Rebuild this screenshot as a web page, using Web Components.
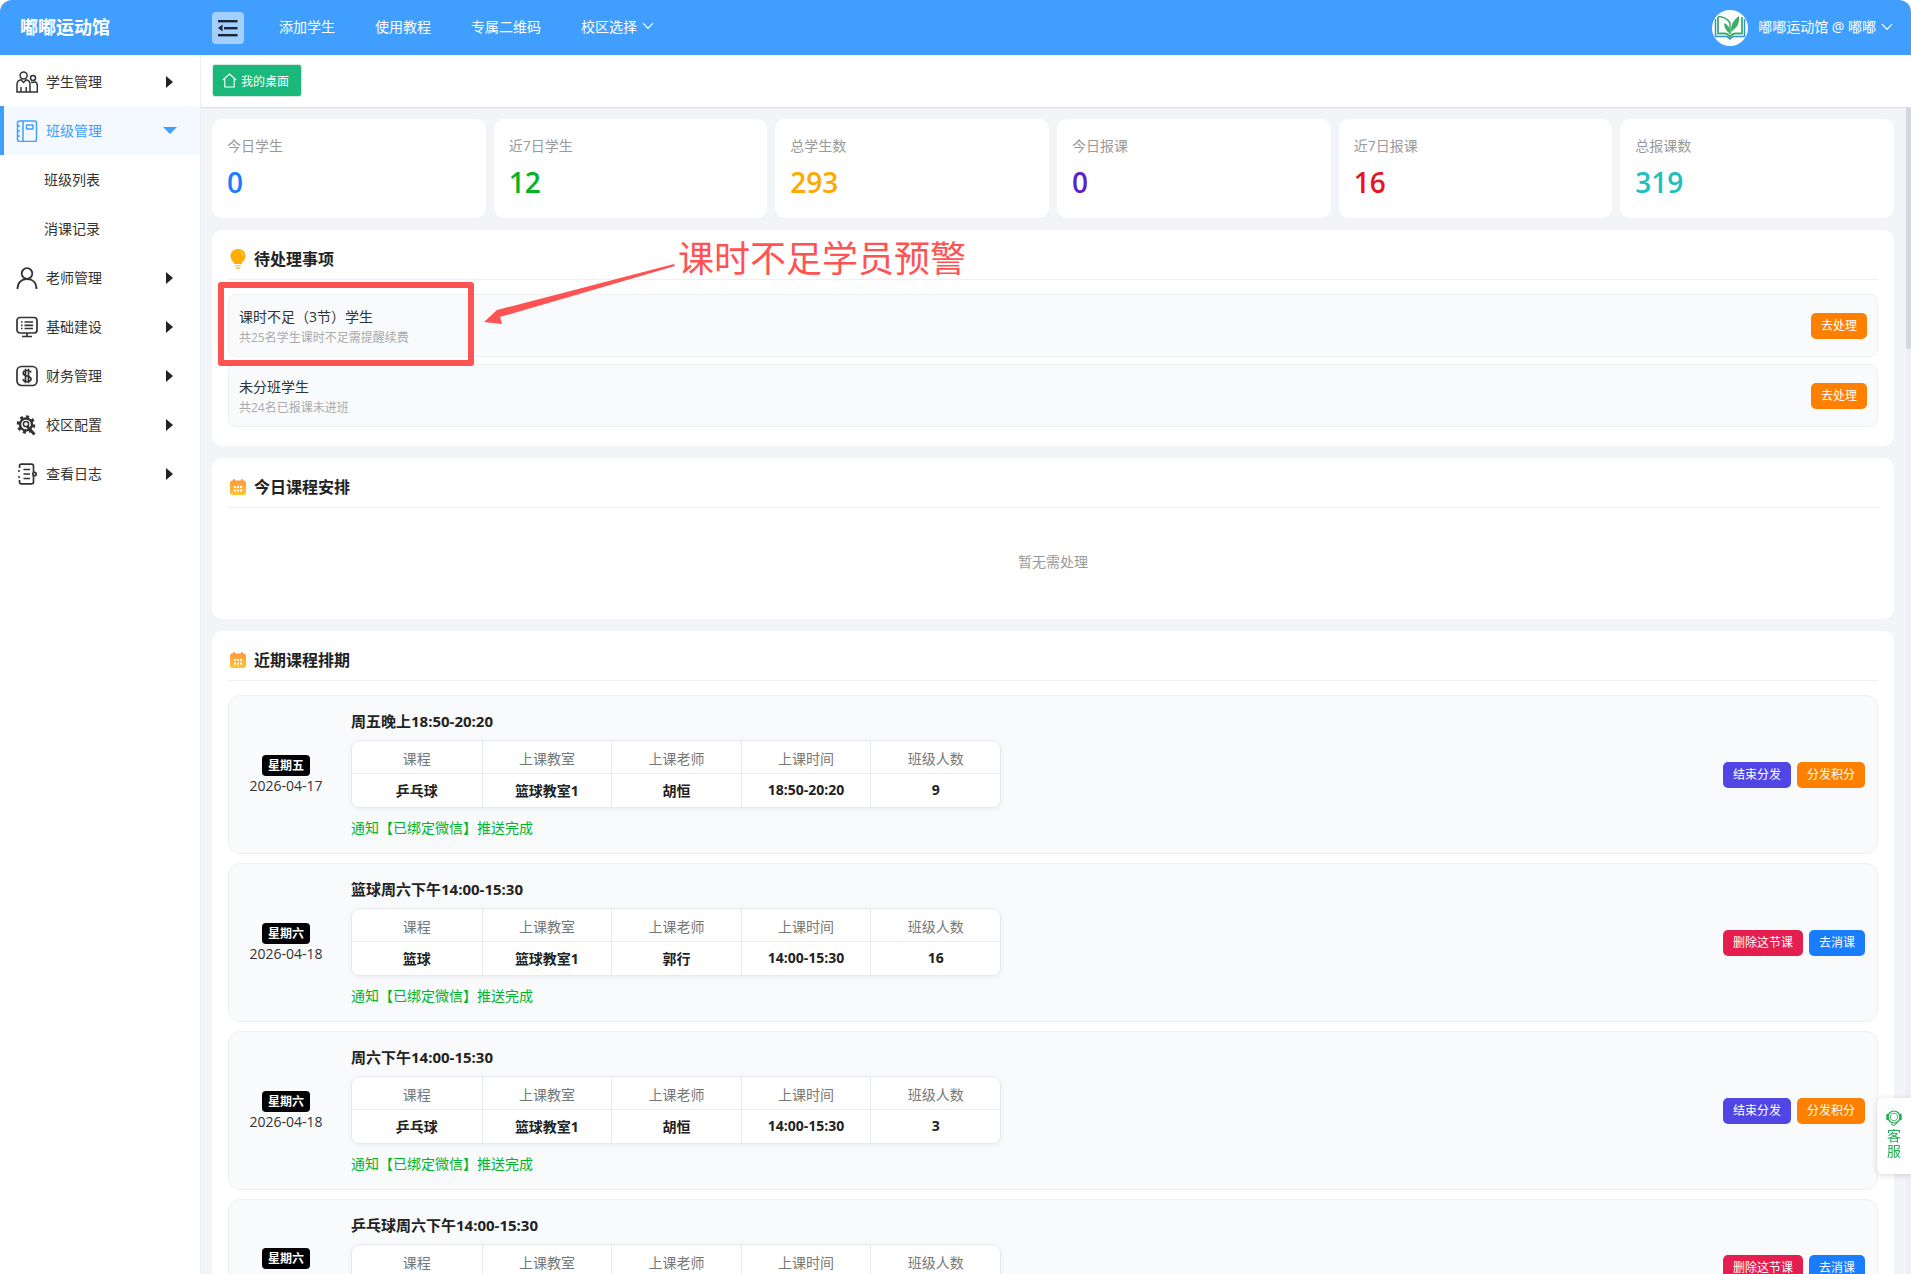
<!DOCTYPE html>
<html lang="zh">
<head>
<meta charset="utf-8">
<title>嘟嘟运动馆</title>
<style>
    html, body { margin: 0; height: 100%; overflow: hidden; background: #fff; }
    body { font-family: "Open Sans", "Noto Sans CJK SC", sans-serif; font-size: 14px; color: #333; }
</style>
</head>
<body>
<app-shell>
    <app-topbar slot="top"></app-topbar>
    <app-sidebar slot="side">
        <app-menu-item icon="students">学生管理</app-menu-item>
        <app-menu-item icon="book" state="open">班级管理</app-menu-item>
        <app-menu-item sub>班级列表</app-menu-item>
        <app-menu-item sub>消课记录</app-menu-item>
        <app-menu-item icon="teacher">老师管理</app-menu-item>
        <app-menu-item icon="monitor">基础建设</app-menu-item>
        <app-menu-item icon="dollar">财务管理</app-menu-item>
        <app-menu-item icon="gear">校区配置</app-menu-item>
        <app-menu-item icon="log">查看日志</app-menu-item>
    </app-sidebar>
    <app-tabs slot="tabs"></app-tabs>
    <app-main slot="main">
        <app-stats>
            <app-stat label="今日学生" value="0" color="#1a7cff"></app-stat>
            <app-stat label="近7日学生" value="12" color="#00b42a"></app-stat>
            <app-stat label="总学生数" value="293" color="#ffa800"></app-stat>
            <app-stat label="今日报课" value="0" color="#5a22cc"></app-stat>
            <app-stat label="近7日报课" value="16" color="#e6141e"></app-stat>
            <app-stat label="总报课数" value="319" color="#1ebfbf"></app-stat>
        </app-stats>

        <app-section icon="bulb" heading="待处理事项">
            <app-todo heading="课时不足（3节）学生" note="共25名学生课时不足需提醒续费"></app-todo>
            <app-todo heading="未分班学生" note="共24名已报课未进班"></app-todo>
            <app-callout slot="over">课时不足学员预警</app-callout>
        </app-section>

        <app-section icon="calendar" heading="今日课程安排">
            <app-empty>暂无需处理</app-empty>
        </app-section>

        <app-section icon="calendar" heading="近期课程排期">
            <app-lesson heading="周五晚上18:50-20:20" week="星期五" date="2026-04-17"
                values="乒乓球|篮球教室1|胡恒|18:50-20:20|9" notice="通知【已绑定微信】推送完成">
                <app-btn color="#5046e5">结束分发</app-btn>
                <app-btn color="#ff8000">分发积分</app-btn>
            </app-lesson>
            <app-lesson heading="篮球周六下午14:00-15:30" week="星期六" date="2026-04-18"
                values="篮球|篮球教室1|郭行|14:00-15:30|16" notice="通知【已绑定微信】推送完成">
                <app-btn color="#e41e4f">删除这节课</app-btn>
                <app-btn color="#1a7cff">去消课</app-btn>
            </app-lesson>
            <app-lesson heading="周六下午14:00-15:30" week="星期六" date="2026-04-18"
                values="乒乓球|篮球教室1|胡恒|14:00-15:30|3" notice="通知【已绑定微信】推送完成">
                <app-btn color="#5046e5">结束分发</app-btn>
                <app-btn color="#ff8000">分发积分</app-btn>
            </app-lesson>
            <app-lesson heading="乒乓球周六下午14:00-15:30" week="星期六" date="2026-04-18">
                <app-btn color="#e41e4f">删除这节课</app-btn>
                <app-btn color="#1a7cff">去消课</app-btn>
            </app-lesson>
        </app-section>
    </app-main>
</app-shell>
<app-service></app-service>

<script>
const icons = {
    students: `<svg viewBox="0 0 22 22" fill="none" stroke="currentColor" stroke-width="1.500">
        <circle cx="7.600" cy="4.400" r="3.500"/><circle cx="17" cy="7" r="2.500"/>
        <path d="M1 21V13.500Q1 9.600 5 8.800L7.600 11.500L10.200 8.800Q14 9.600 14 13.500V21Z"/>
        <path d="M5 16V21M10.200 16V21M15 10.800Q17 12 19 10.800Q21.300 11.500 21.300 14.500V21H14"/>
    </svg>`,
    book: `<svg viewBox="0 0 22 22" fill="none" stroke="currentColor" stroke-width="1.500">
        <rect x="1.500" y="1" width="19" height="20.500" rx="2"/><path d="M7 1V21.500M1.500 6H4M1.500 11H4M1.500 16H4"/>
        <rect x="10.500" y="5" width="6.500" height="4" rx=".5"/>
    </svg>`,
    teacher: `<svg viewBox="0 0 22 22" fill="none" stroke="currentColor" stroke-width="1.800">
        <circle cx="11" cy="6.500" r="5.300"/><path d="M1.500 22C1.500 15.500 5.500 12 11 12S20.500 15.500 20.500 22"/>
    </svg>`,
    monitor: `<svg viewBox="0 0 22 22" fill="none" stroke="currentColor" stroke-width="1.700">
        <rect x="1" y="1.500" width="20" height="15.500" rx="3"/>
        <path d="M5 6H6.500M5 9.300H6.500M5 12.500H6.500M8.500 6H17M8.500 9.300H17M8.500 12.500H17M11 17V20M6 20.500H16"/>
    </svg>`,
    dollar: `<svg viewBox="0 0 22 22" fill="none" stroke="currentColor" stroke-width="1.700">
        <rect x="1" y="1.500" width="20" height="19" rx="4.500"/>
        <path d="M15 7.500Q14.500 5.500 11 5.500Q7.200 5.500 7.200 8Q7.200 10.300 11 11Q15 11.800 15 14Q15 16.500 11 16.500Q7.500 16.500 7 14.300M9.500 3.800V18.200M12.500 3.800V18.200"/>
    </svg>`,
    gear: `<svg viewBox="0 0 22 22" fill="none" stroke="currentColor">
        <circle cx="10" cy="10.500" r="7.800" stroke-width="3" stroke-dasharray="3 3.100"/>
        <circle cx="10" cy="10.500" r="6" stroke-width="2.400"/>
        <path d="M10.500 11.500L18.500 20.500" stroke-width="2.800"/>
        <circle cx="10" cy="10" r="2.600" fill="#fff" stroke="currentColor" stroke-width="1.500"/>
    </svg>`,
    log: `<svg viewBox="0 0 22 22" fill="none" stroke="currentColor" stroke-width="1.700">
        <path d="M3.500 5V3Q3.500 1.200 5.500 1.200H15.500Q17.500 1.200 17.500 3V9M17.500 13V19Q17.500 20.800 15.500 20.800H5.500Q3.500 20.800 3.500 19V17"/>
        <path d="M2 8H4M2 14H4M7.500 6.500H14M7.500 11H14M7.500 15.500H14"/><circle cx="18.500" cy="11" r="1.700"/>
    </svg>`,
    bulb: `<svg viewBox="0 0 16 20">
        <path d="M8 0C3.400 0 .5 3.200 .5 7C.5 10.500 3.500 12.500 4.500 15H11.500C12.500 12.500 15.500 10.500 15.500 7C15.500 3.200 12.600 0 8 0Z" fill="#ffad00"/>
        <path d="M4.700 16H11.300V17.200H4.700ZM5.500 18H10.500L9.500 20H6.500Z" fill="#ffc95c"/>
        <path d="M10.500 2.500Q13 3.800 13 6.500" fill="none" stroke="#ffe3a0" stroke-width="1"/>
    </svg>`,
    calendar: `<svg viewBox="0 0 16 16">
        <defs><linearGradient id="cal" x1="0" y1="0" x2="0" y2="1">
            <stop offset="0" stop-color="#ff9a3c"/><stop offset="1" stop-color="#ffc533"/>
        </linearGradient></defs>
        <rect y="1.500" width="16" height="14.500" rx="2.500" fill="url(#cal)"/>
        <rect x="3" width="2" height="3.500" rx="1" fill="#ff9a3c"/><rect x="11" width="2" height="3.500" rx="1" fill="#ff9a3c"/>
        <g fill="#fff"><rect x="4" y="7" width="2" height="2"/><rect x="7" y="7" width="2" height="2"/><rect x="10" y="7" width="2" height="2"/>
        <rect x="4" y="10.500" width="2" height="2"/><rect x="7" y="10.500" width="2" height="2"/><rect x="10" y="10.500" width="2" height="2"/></g>
    </svg>`
};

const chevron = `<svg width="12" height="8" viewBox="0 0 12 8" fill="none" stroke="currentColor" stroke-width="1.200"><path d="M1 1.200L6 6.500L11 1.200"/></svg>`;

class AppShell extends HTMLElement {
    constructor() {
        super();
        this.attachShadow( { mode:"open" } );
        this.shadowRoot.innerHTML = `
            <style>
                :host {
                    display: grid;
                    grid-template-columns: 201px 1fr;
                    grid-template-rows: 55px 53px 1fr;
                    height: 100vh;
                    overflow: hidden;
                    border-radius: 12px 12px 0 0;
                }
                .top { grid-column: 1 / 3; }
                .side { grid-row: 2 / 4; }
                .main { min-height: 0; min-width: 0; }
            </style>
            <div class="top"><slot name="top"></slot></div>
            <div class="side"><slot name="side"></slot></div>
            <div><slot name="tabs"></slot></div>
            <div class="main"><slot name="main"></slot></div>
        `;
    }
}

class AppTopbar extends HTMLElement {
    constructor() {
        super();
        this.attachShadow( { mode:"open" } );
        this.shadowRoot.innerHTML = `
            <style>
                :host { display: flex; align-items: center; height: 55px; background: #409eff; color: #fff; }
                .logo { width: 212px; padding-left: 20px; margin-bottom: 3px; box-sizing: border-box; font-size: 18px; font-weight: 700; }
                .toggle {
                    width: 32px; height: 32px; border-radius: 4px; background: #a3cfff;
                    display: flex; align-items: center; justify-content: center;
                }
                nav { display: flex; gap: 40px; margin-left: 35px; margin-bottom: 3px; font-size: 14px; }
                nav span { display: flex; align-items: center; gap: 5px; }
                .user { margin-left: auto; margin-right: 18px; display: flex; align-items: center; font-size: 14px; }
                .avatar { width: 36px; height: 36px; margin-right: 10px; }
                .name { margin-bottom: 3px; }
                .down { display: flex; margin-left: 5px; margin-bottom: 2px; }
            </style>
            <div class="logo">嘟嘟运动馆</div>
            <div class="toggle">
                <svg width="20" height="18" viewBox="0 0 20 18" fill="#1d2733">
                    <rect y="1" width="19.500" height="2.400"/><rect x="6" y="8" width="13.500" height="2.400"/><rect y="15" width="19.500" height="2.400"/>
                    <path d="M4.500 5.500V12.500L0 9Z"/>
                </svg>
            </div>
            <nav>
                <span>添加学生</span><span>使用教程</span><span>专属二维码</span>
                <span>校区选择${ chevron }</span>
            </nav>
            <div class="user">
                <svg class="avatar" viewBox="0 0 36 36">
                    <circle cx="18" cy="18" r="18" fill="#fff"/>
                    <path d="M3.500 9V26.500H15L18 29L21 26.500H32.500V9" fill="none" stroke="#2f8fd8" stroke-width="1.500"/>
                    <path d="M6 7V23.500H13Q16.500 24 18 27Q19.500 24 23 23.500H30V7" fill="none" stroke="#3dae6b" stroke-width="1.800"/>
                    <path d="M6 6.500Q14 6.500 18 13V24" fill="none" stroke="#3dae6b" stroke-width="1.500"/>
                    <path d="M19 22Q18 12 27 6Q29 15 19 22Z" fill="#3dae6b"/>
                    <path d="M18.500 24Q12 20 12 13Q18 15 18.500 24Z" fill="#3dae6b"/>
                </svg>
                <span class="name">嘟嘟运动馆 @ 嘟嘟</span>
                <span class="down">${ chevron }</span>
            </div>
        `;
    }
}

class AppSidebar extends HTMLElement {
    constructor() {
        super();
        this.attachShadow( { mode:"open" } );
        this.shadowRoot.innerHTML = `
            <style>
                :host {
                    display: block; height: 100%; box-sizing: border-box; padding-top: 2px;
                    background: #fff; border-right: 1px solid #eeeff2;
                }
            </style>
            <slot></slot>
        `;
    }
}

class AppMenuItem extends HTMLElement {
    constructor() {
        super();
        this.attachShadow( { mode:"open" } );
        this.shadowRoot.innerHTML = `
            <style>
                :host {
                    display: flex; align-items: center; height: 49px; box-sizing: border-box;
                    padding-left: 16px; color: #333; font-size: 14px;
                }
                :host([sub]) { padding-left: 44px; }
                :host([state="open"]) {
                    color: #409eff; background: #f4f8ff; padding-left: 12px;
                    border-left: 4px solid #409eff;
                }
                .icon { width: 22px; height: 22px; margin-right: 8px; }
                .icon svg { display: block; width: 22px; height: 22px; }
                .text { margin-bottom: 2px; }
                .arrow {
                    position: absolute; left: 166px; width: 0; height: 0;
                    border-left: 7px solid #222; border-top: 6.500px solid transparent; border-bottom: 6.500px solid transparent;
                }
                :host([state="open"]) .arrow {
                    left: 163px; border-left: 7px solid transparent; border-right: 7px solid transparent;
                    border-top: 7px solid #409eff; border-bottom: 0;
                }
            </style>
            <span class="icon"></span><span class="text"><slot></slot></span><span class="arrow"></span>
        `;
    }

    connectedCallback() {
        const name = this.getAttribute('icon');
        const icon = this.shadowRoot.querySelector('.icon');
        const arrow = this.shadowRoot.querySelector('.arrow');
        if ( name ) {
            icon.innerHTML = icons[ name ];
        } else {
            icon.remove();
            arrow.remove();
        }
    }
}

class AppTabs extends HTMLElement {
    constructor() {
        super();
        this.attachShadow( { mode:"open" } );
        this.shadowRoot.innerHTML = `
            <style>
                :host {
                    display: block; height: 53px; box-sizing: border-box; padding: 9px 0 0 11px;
                    background: #fff; border-bottom: 1px solid #dcdde1;
                }
                .home {
                    display: inline-flex; align-items: center; gap: 4px; height: 33px; box-sizing: border-box;
                    padding: 0 12px 0 9px; background: #1ab87a; color: #fff; font-size: 12px;
                    border: 1px solid #d5e8df; border-radius: 3px;
                }
            </style>
            <div class="home">
                <svg width="15" height="15" viewBox="0 0 15 15" fill="none" stroke="currentColor" stroke-width="1.100">
                    <path d="M.8 7L7.500 1L14.200 7M2.800 5.800V14H12.200V5.800"/>
                </svg>
                我的桌面
            </div>
        `;
    }
}

class AppMain extends HTMLElement {
    constructor() {
        super();
        this.attachShadow( { mode:"open" } );
        this.shadowRoot.innerHTML = `
            <style>
                :host { display: flex; height: 100%; background: #f3f4f8; }
                .scroll { flex: 1; min-width: 0; height: 100%; overflow: hidden; }
                .bar { width: 5px; flex: none; background: #eef0f6; }
                .thumb { height: 241px; background: #d4d6e0; border-radius: 0 0 3px 3px; }
                .content {
                    box-sizing: border-box; padding: 11px 12px 12px 11px;
                    display: flex; flex-direction: column; gap: 12px;
                }
            </style>
            <div class="scroll"><div class="content"><slot></slot></div></div>
            <div class="bar"><div class="thumb"></div></div>
        `;
    }
}

class AppStats extends HTMLElement {
    constructor() {
        super();
        this.attachShadow( { mode:"open" } );
        this.shadowRoot.innerHTML = `
            <style>:host { display: grid; grid-template-columns: repeat( 6, 1fr ); gap: 8px; }</style>
            <slot></slot>
        `;
    }
}

class AppStat extends HTMLElement {
    constructor() {
        super();
        this.attachShadow( { mode:"open" } );
        this.shadowRoot.innerHTML = `
            <style>
                :host {
                    display: block; height: 99px; box-sizing: border-box; padding: 17px 15px 0;
                    background: #fff; border-radius: 10px;
                }
                .label { height: 20px; line-height: 20px; color: #999; font-size: 14px; }
                .value { height: 40px; line-height: 40px; margin-top: 6px; font-size: 28px; font-weight: 600; }
            </style>
            <div class="label"></div>
            <div class="value"></div>
        `;
    }

    connectedCallback() {
        const value = this.shadowRoot.querySelector('.value');
        this.shadowRoot.querySelector('.label').textContent = this.getAttribute('label');
        value.textContent = this.getAttribute('value');
        value.style.color = this.getAttribute('color');
    }
}

class AppSection extends HTMLElement {
    constructor() {
        super();
        this.attachShadow( { mode:"open" } );
        this.shadowRoot.innerHTML = `
            <style>
                :host {
                    display: block; position: relative; box-sizing: border-box; padding: 0 16px 19px;
                    background: #fff; border-radius: 10px;
                }
                h3 {
                    display: flex; align-items: center; gap: 8px; margin: 0 0 14px; height: 50px; box-sizing: border-box;
                    padding: 18px 2px 10px; font-size: 16px; font-weight: 700; line-height: 22px; color: #222;
                    border-bottom: 1px solid #eeeff2;
                }
                .icon { display: flex; width: 16px; }
                .icon svg { width: 16px; }
                .list { display: flex; flex-direction: column; gap: 7px; }
                ::slotted( app-lesson ) { margin-bottom: 2px; }
            </style>
            <h3><span class="icon"></span><span class="title"></span></h3>
            <div class="list"><slot></slot></div>
            <slot name="over"></slot>
        `;
    }

    connectedCallback() {
        this.shadowRoot.querySelector('.icon').innerHTML = icons[ this.getAttribute('icon') ];
        this.shadowRoot.querySelector('.title').textContent = this.getAttribute('heading');
    }
}

class AppTodo extends HTMLElement {
    constructor() {
        super();
        this.attachShadow( { mode:"open" } );
        this.shadowRoot.innerHTML = `
            <style>
                :host {
                    display: flex; align-items: center; justify-content: space-between; height: 63px; box-sizing: border-box;
                    padding: 0 10px 0 10px; background: #f9fafc; border: 1px solid #eff0f3; border-radius: 8px;
                }
                .text { padding-top: 4px; }
                .title { color: #333; font-size: 14px; line-height: 20px; }
                .note { margin-top: 1px; color: #aaa; font-size: 12px; line-height: 20px; }
            </style>
            <div class="text"><div class="title"></div><div class="note"></div></div>
            <app-btn color="#ff8000">去处理</app-btn>
        `;
    }

    connectedCallback() {
        this.shadowRoot.querySelector('.title').textContent = this.getAttribute('heading');
        this.shadowRoot.querySelector('.note').textContent = this.getAttribute('note');
    }
}

class AppBtn extends HTMLElement {
    constructor() {
        super();
        this.attachShadow( { mode:"open" } );
        this.shadowRoot.innerHTML = `
            <style>
                :host {
                    display: inline-block; height: 26px; line-height: 26px; padding: 0 10px;
                    color: #fff; font-size: 12px; border-radius: 5px; white-space: nowrap;
                }
            </style>
            <slot></slot>
        `;
    }

    connectedCallback() {
        this.style.background = this.getAttribute('color');
    }
}

class AppEmpty extends HTMLElement {
    constructor() {
        super();
        this.attachShadow( { mode:"open" } );
        this.shadowRoot.innerHTML = `
            <style>
                :host {
                    display: flex; align-items: center; justify-content: center; height: 78px;
                    color: #999; font-size: 14px;
                }
            </style>
            <slot></slot>
        `;
    }
}

class AppLesson extends HTMLElement {
    constructor() {
        super();
        this.attachShadow( { mode:"open" } );
        this.shadowRoot.innerHTML = `
            <style>
                :host {
                    display: flex; align-items: center; box-sizing: border-box; padding: 15px 12px 15px 0;
                    background: #f9fafc; border: 1px solid #eff0f3; border-radius: 12px;
                }
                .day { width: 114px; flex: none; margin-right: 8px; padding-top: 1px; display: flex; flex-direction: column; align-items: center; }
                .week {
                    height: 21px; line-height: 21px; padding: 0 6px; background: #000; color: #fff;
                    font-size: 12px; font-weight: 700; border-radius: 4px;
                }
                .date { font-size: 14px; line-height: 20px; color: #333; }
                .info { flex: 1; }
                .title { height: 20px; font-size: 15px; font-weight: 700; line-height: 20px; color: #222; white-space: nowrap; }
                table {
                    width: 650px; height: 68px; margin-top: 9px; table-layout: fixed; border-collapse: separate; border-spacing: 0;
                    background: #fff; border: 1px solid #e8e9ee; border-radius: 8px; box-shadow: 0 2px 6px rgba( 0, 0, 0, .05 );
                }
                th, td { height: 33px; box-sizing: border-box; padding: 0; text-align: center; font-size: 14px; }
                th { padding-top: 1px; font-weight: 400; color: #777; border-bottom: 1px solid #e8e9ee; }
                td { padding-bottom: 2px; font-weight: 700; color: #222; }
                th + th, td + td { border-left: 1px solid #e8e9ee; }
                .notice { height: 20px; margin-top: 10px; color: #00b42a; font-size: 14px; line-height: 20px; }
                .notice:empty { height: 9px; margin-top: 0; }
                .actions { display: flex; gap: 6px; }
            </style>
            <div class="day"><div class="week"></div><div class="date"></div></div>
            <div class="info">
                <div class="title"></div>
                <table>
                    <thead><tr><th>课程</th><th>上课教室</th><th>上课老师</th><th>上课时间</th><th>班级人数</th></tr></thead>
                    <tbody><tr></tr></tbody>
                </table>
                <div class="notice"></div>
            </div>
            <div class="actions"><slot></slot></div>
        `;
    }

    connectedCallback() {
        const root = this.shadowRoot;
        root.querySelector('.week').textContent = this.getAttribute('week');
        root.querySelector('.date').textContent = this.getAttribute('date');
        root.querySelector('.title').textContent = this.getAttribute('heading');
        root.querySelector('.notice').textContent = this.getAttribute('notice') || "";

        const values = ( this.getAttribute('values') || "||||" ).split('|');
        const row = root.querySelector('tbody tr');
        values.forEach( value => {
            const cell = document.createElement('td');
            cell.textContent = value;
            row.appendChild( cell );
        } );
    }
}

class AppCallout extends HTMLElement {
    constructor() {
        super();
        this.attachShadow( { mode:"open" } );
        this.shadowRoot.innerHTML = `
            <style>
                :host { position: absolute; left: 0; top: 0; width: 780px; height: 140px; pointer-events: none; }
                .box {
                    position: absolute; left: 6px; top: 52px; width: 256px; height: 84px; box-sizing: border-box;
                    border: 6px solid #ff5252; border-radius: 3px;
                }
                svg { position: absolute; left: 0; top: 0; }
                .text {
                    position: absolute; left: 466px; top: 1px; height: 56px; line-height: 56px;
                    color: #ff5252; font-size: 36px; white-space: nowrap;
                }
            </style>
            <div class="box"></div>
            <svg width="500" height="110" viewBox="0 0 500 110">
                <path d="M462 34L285 80L272 92L290 94L288 87L463 36Z" fill="#ff5252"/>
            </svg>
            <div class="text"><slot></slot></div>
        `;
    }
}

class AppService extends HTMLElement {
    constructor() {
        super();
        this.attachShadow( { mode:"open" } );
        this.shadowRoot.innerHTML = `
            <style>
                :host {
                    position: fixed; right: 0; top: 1098px; width: 34px; height: 76px; box-sizing: border-box; padding-top: 12px;
                    display: flex; flex-direction: column; align-items: center; background: #fff;
                    border-radius: 6px 0 0 6px; box-shadow: 0 1px 6px rgba( 0, 0, 0, .16 );
                    color: #22ab50; font-size: 14px; line-height: 15px;
                }
                svg { margin-bottom: 2px; }
                span { width: 14px; word-break: break-all; }
            </style>
            <svg width="18" height="16" viewBox="0 0 18 16" fill="none" stroke="currentColor">
                <circle cx="9" cy="7" r="6" stroke-width="1.200"/><circle cx="9" cy="7" r="3.800" stroke-width=".8"/>
                <path d="M2.500 5V9M15.500 5V9" stroke-width="2.400" stroke-linecap="round"/>
                <path d="M6 14L9 15.500L12 13" stroke-width="1"/>
            </svg>
            <span>客服</span>
        `;
    }
}

window.customElements.define( 'app-shell', AppShell );
window.customElements.define( 'app-topbar', AppTopbar );
window.customElements.define( 'app-sidebar', AppSidebar );
window.customElements.define( 'app-menu-item', AppMenuItem );
window.customElements.define( 'app-tabs', AppTabs );
window.customElements.define( 'app-main', AppMain );
window.customElements.define( 'app-stats', AppStats );
window.customElements.define( 'app-stat', AppStat );
window.customElements.define( 'app-section', AppSection );
window.customElements.define( 'app-todo', AppTodo );
window.customElements.define( 'app-btn', AppBtn );
window.customElements.define( 'app-empty', AppEmpty );
window.customElements.define( 'app-lesson', AppLesson );
window.customElements.define( 'app-callout', AppCallout );
window.customElements.define( 'app-service', AppService );
</script>
</body>
</html>
